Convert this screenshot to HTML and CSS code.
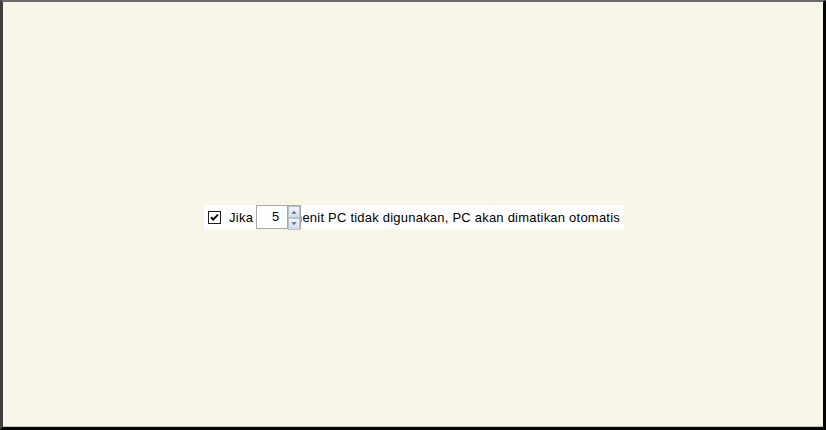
FILE: index.html
```html
<!DOCTYPE html>
<html>
<head>
<meta charset="utf-8">
<link rel="stylesheet" href="styles.css">
</head>
<body>
<div class="frame">
  <div class="panel">
    <span class="check">
      <svg width="13" height="13" viewBox="0 0 13 13">
        <rect x="0.5" y="0.5" width="12" height="12" fill="#fff" stroke="#1c1c1c"/>
        <path d="M3 6.2 L5.2 8.6 L10 3.6" fill="none" stroke="#000" stroke-width="2"/>
      </svg>
    </span>
    <span class="lbl jika">Jika</span>
    <span class="spin">
      <span class="field">5</span>
      <span class="btns">
        <span class="btn">
          <svg width="12" height="10" viewBox="0 0 12 10"><path d="M3 7 L6 3.5 L9 7 Z" fill="#4a6f9c"/></svg>
        </span>
        <span class="btn">
          <svg width="12" height="10" viewBox="0 0 12 10"><path d="M3 3 L6 6.5 L9 3 Z" fill="#4a6f9c"/></svg>
        </span>
      </span>
    </span>
    <span class="lbl rest">menit PC tidak digunakan, PC akan dimatikan otomatis</span>
  </div>
</div>
</body>
</html>
```
FILE: styles.css
```css
html, body {
  margin: 0;
  padding: 0;
}
body {
  width: 826px;
  height: 430px;
  overflow: hidden;
  font-family: "Liberation Sans", Arial, sans-serif;
}
.frame {
  box-sizing: border-box;
  width: 826px;
  height: 430px;
  background: #f8f5e9;
  border-top: 2px solid #6a6a6a;
  border-left: 3px solid #3f3f3f;
  border-right: 3px solid #050505;
  border-bottom: 3px solid #050505;
  box-shadow: inset 0 -1px 0 #c9c6bc;
  display: flex;
  align-items: flex-start;
  justify-content: center;
  padding-top: 203px;
  padding-left: 2px;
}
.panel {
  background: #ffffff;
  height: 24px;
  width: 420px;
  box-sizing: border-box;
  display: flex;
  align-items: center;
  padding-left: 4px;
  font-size: 13px;
  color: #000;
}
.check {
  display: flex;
  width: 13px;
  height: 13px;
}
.jika {
  margin-left: 8px;
  letter-spacing: 0.3px;
}
.spin {
  position: relative;
  z-index: 1;
  display: flex;
  height: 24px;
  margin-left: 3px;
  margin-right: -10px;
  box-sizing: border-box;
}
.field {
  box-sizing: border-box;
  width: 31px;
  height: 24px;
  border: 1px solid #a7a7a7;
  border-right: none;
  background: #fff;
  text-align: right;
  padding-right: 8px;
  line-height: 22px;
  color: #000;
}
.btns {
  display: flex;
  flex-direction: column;
  width: 14px;
  height: 24px;
  box-sizing: border-box;
  border: 1px solid #a7a7a7;
  background: #fff;
}
.btn {
  flex: 1;
  display: flex;
  align-items: center;
  justify-content: center;
  background: linear-gradient(#f3f5f8, #d6dde6);
  border: 1px solid #b8c2cf;
}
.rest {
  margin-left: 0;
  letter-spacing: 0.22px;
  white-space: nowrap;
}
```
